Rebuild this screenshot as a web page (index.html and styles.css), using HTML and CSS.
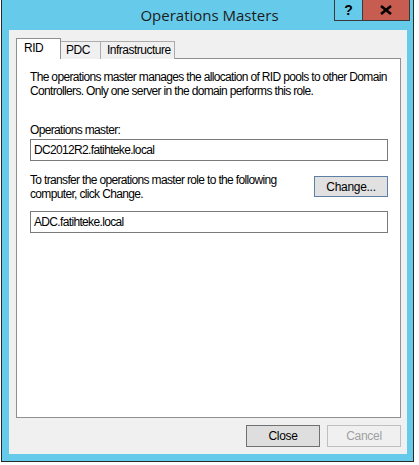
FILE: index.html
```html
<!DOCTYPE html>
<html lang="en">
<head>
    <meta charset="UTF-8">
    <title>Operations Masters</title>
    <link rel="stylesheet" href="styles.css">
</head>
<body>
<div class="window">
    <div class="titlebar">
        <span class="title">Operations Masters</span>
        <div class="caption-btns">
            <span class="cap-btn help">?</span>
            <span class="cap-btn close">
                <svg width="12" height="10" viewBox="0 0 12 10"><path d="M1 1 L11 9 M11 1 L1 9" stroke="#000" stroke-width="2.6" fill="none"/></svg>
            </span>
        </div>
    </div>
    <div class="client">
        <div class="tabs">
            <span class="tab active">RID</span>
            <span class="tab pdc">PDC</span>
            <span class="tab infra">Infrastructure</span>
        </div>
        <div class="panel">
            <p class="desc">The operations master manages the allocation of RID pools to other Domain Controllers. Only one server in the domain performs this role.</p>
            <label class="lbl">Operations master:</label>
            <div class="field">DC2012R2.fatihteke.local</div>
            <div class="transfer">
                <p>To transfer the operations master role to the following computer, click Change.</p>
                <button class="btn focus">Change...</button>
            </div>
            <div class="field">ADC.fatihteke.local</div>
        </div>
        <div class="footer">
            <button class="btn default">Close</button>
            <button class="btn disabled">Cancel</button>
        </div>
    </div>
</div>
</body>
</html>
```

FILE: styles.css
```css
* {
    box-sizing: border-box;
}
body {
    margin: 0;
    background: #ffffff;
    font-family: 'Liberation Sans', Arial, sans-serif;
    font-size: 12px;
    letter-spacing: -0.66px;
    color: #000;
}
.window {
    margin-left: 1px;
    width: 413px;
    height: 462px;
    background: #66cbea;
    border: 1px solid #2b2b2b;
    border-top: none;
    display: flex;
    flex-direction: column;
}
.titlebar {
    height: 30px;
    flex-shrink: 0;
    position: relative;
    display: flex;
    align-items: center;
    justify-content: center;
}
.title {
    font-family: 'Open Sans', sans-serif;
    font-size: 15px;
    letter-spacing: 0;
    color: #1b1b1b;
    margin-left: 4px;
}
.caption-btns {
    position: absolute;
    top: 0;
    right: 3px;
    display: flex;
}
.cap-btn {
    height: 21px;
    border: 1px solid #3a3a3a;
    border-top: none;
    display: flex;
    align-items: center;
    justify-content: center;
    font-weight: bold;
    font-size: 14px;
    letter-spacing: 0;
}
.cap-btn.help {
    width: 28px;
    border-right: none;
}
.cap-btn.close {
    width: 48px;
    background: #c75c50;
}
.client {
    flex: 1;
    margin: 0 6px 7px 7px;
    background: #f0f0f0;
    padding: 8px 6px 0 7px;
    display: flex;
    flex-direction: column;
}
.tabs {
    display: flex;
    align-items: flex-end;
    height: 21px;
    flex-shrink: 0;
    position: relative;
    z-index: 1;
    margin-bottom: -1px;
}
.tab {
    height: 18px;
    line-height: 17px;
    background: #f0f0f0;
    border: 1px solid #acacac;
    border-bottom: none;
    margin-left: -1px;
    color: #000;
    letter-spacing: -0.5px;
}
.tab.active {
    width: 45px;
    height: 21px;
    line-height: 19px;
    background: #fff;
    margin-left: 0;
    padding-left: 7px;
    border-color: #8e8f8f;
    position: relative;
    z-index: 2;
}
.tab.pdc {
    width: 41px;
    padding-left: 5px;
}
.tab.infra {
    width: 75px;
    padding-left: 6px;
}
.panel {
    height: 360px;
    flex-shrink: 0;
    background: #fff;
    border: 1px solid #8e8f8f;
    padding: 11px 12px 0 13px;
}
.desc {
    margin: 0;
    line-height: 14px;
}
.lbl {
    display: block;
    margin-top: 25px;
    line-height: 14px;
}
.field {
    height: 22px;
    border: 1px solid #7a7a7a;
    padding-left: 3px;
    line-height: 20px;
    margin-top: 2px;
}
.transfer {
    display: flex;
    justify-content: space-between;
    align-items: flex-start;
    margin-top: 12px;
    margin-bottom: 10px;
}
.transfer p {
    margin: 0;
    width: 270px;
    line-height: 14px;
}
.btn {
    width: 74px;
    height: 22px;
    font-family: 'Liberation Sans', Arial, sans-serif;
    font-size: 12px;
    letter-spacing: -0.3px;
    background: #e1e1e1;
    border: 1px solid #adadad;
    padding: 0;
    color: #000;
}
.btn.focus {
    border-color: #5d7ea5;
    height: 21px;
    margin-top: 3px;
}
.btn.default {
    border-color: #707070;
    background: #dedede;
}
.btn.disabled {
    background: #f0f0f0;
    border-color: #bfbfbf;
    color: #a0a0a0;
}
.footer {
    display: flex;
    justify-content: flex-end;
    gap: 7px;
    margin-top: 7px;
}
```
